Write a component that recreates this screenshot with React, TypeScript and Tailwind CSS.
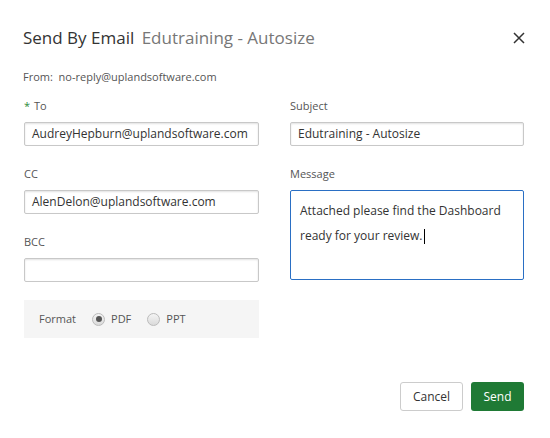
import React from 'react'

const font = { fontFamily: '"Open Sans", "Noto Sans", sans-serif' }

function Field({ label, value, required }: { label: string; value?: string; required?: boolean }) {
  return (
    <div className="flex flex-col">
      <div className="text-[11px] leading-[14px] text-[#555] h-[14px]">
        {required && <span className="text-[#2e8b3a] mr-1">*</span>}
        {label}
      </div>
      <div className="mt-[9px] h-[24px] border border-[#c8c8c8] rounded-[2px] shadow-[inset_0_1px_2px_rgba(0,0,0,0.12)] pl-[7px] pr-[4px] flex items-center text-[12px] text-[#333] whitespace-nowrap overflow-hidden">
        {value}
      </div>
    </div>
  )
}

function Radio({ checked, label }: { checked?: boolean; label: string }) {
  return (
    <label className="flex items-center gap-[6px]">
      <span className="w-[13px] h-[13px] rounded-full border border-[#bbb] bg-gradient-to-b from-[#f4f4f4] to-[#dadada] flex items-center justify-center">
        {checked && <span className="w-[6px] h-[6px] rounded-full bg-[#555]" />}
      </span>
      <span className="text-[11px] text-[#555]">{label}</span>
    </label>
  )
}

export default function App() {
  return (
    <div className="w-[550px] h-[438px] bg-white relative" style={font}>
      <div className="flex items-center justify-between pl-[23px] pr-[25px] pt-[26px]">
        <h1 className="text-[17px] leading-[24px] text-[#333]">
          Send By Email <span className="text-[#777] ml-[3px]">Edutraining - Autosize</span>
        </h1>
        <svg width="12" height="12" viewBox="0 0 12 12" className="text-[#333]">
          <path d="M1 1L11 11M11 1L1 11" stroke="currentColor" strokeWidth="1.5" />
        </svg>
      </div>

      <div className="px-[23px] mt-[20px] text-[11px] leading-[14px] text-[#555]">
        From:&nbsp; no-reply@uplandsoftware.com
      </div>

      <div className="grid grid-cols-2 gap-x-[30px] pl-[24px] pr-[26px] mt-[15px]">
        <div className="flex flex-col gap-[21px]">
          <Field label="To" required value="AudreyHepburn@uplandsoftware.com" />
          <Field label="CC" value="AlenDelon@uplandsoftware.com" />
          <Field label="BCC" />
          <div className="mt-[-3px] h-[38px] bg-[#f5f5f5] flex items-center pl-[15px]">
            <span className="text-[11px] text-[#555] mr-[16px]">Format</span>
            <Radio checked label="PDF" />
            <span className="w-[16px]" />
            <Radio label="PPT" />
          </div>
        </div>
        <div className="flex flex-col gap-[21px] pl-[1px]">
          <Field label="Subject" value="Edutraining - Autosize" />
          <div className="flex flex-col">
            <div className="text-[11px] leading-[14px] text-[#555]">Message</div>
            <div className="mt-[9px] h-[90px] border border-[#2a6fc4] rounded-[2px] pl-[9px] pr-[6px] pt-[7px] text-[12px] leading-[25px] text-[#333]">
              Attached please find the Dashboard ready for your review.
              <span className="inline-block w-[1px] h-[15px] bg-black align-middle ml-[1px]" />
            </div>
          </div>
        </div>
      </div>

      <div className="absolute right-[26px] bottom-[27px] flex gap-[8px]">
        <button className="h-[29px] w-[63px] border border-[#ccc] rounded-[3px] bg-white text-[12px] text-[#333]">
          Cancel
        </button>
        <button className="h-[29px] w-[53px] rounded-[3px] bg-[#1f7a35] text-[12px] text-white">
          Send
        </button>
      </div>
    </div>
  )
}
